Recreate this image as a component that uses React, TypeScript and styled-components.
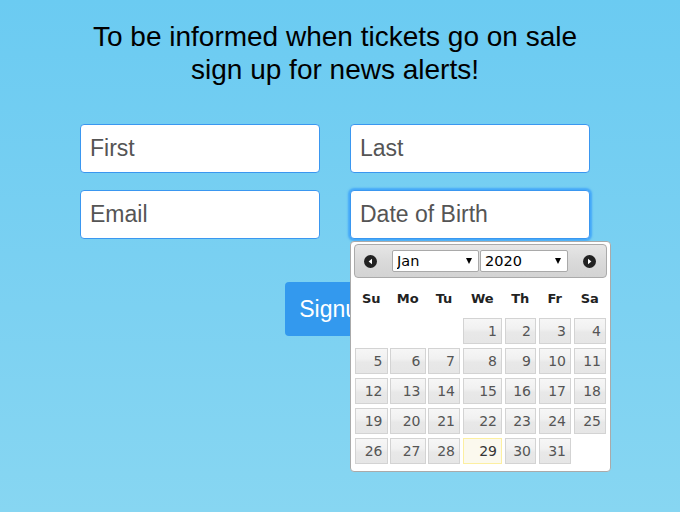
import React from "react";
import styled, { createGlobalStyle } from "styled-components";

const Global = createGlobalStyle`
  html, body { margin: 0; padding: 0; }
  body {
    font-family: "Liberation Sans", Arial, sans-serif;
    background: #6ccbf2;
  }
`;

const Page = styled.div`
  width: 680px;
  min-height: 512px;
  box-sizing: border-box;
  padding: 20px 10px 0 0;
  background: linear-gradient(to bottom, #6bcbf2 0%, #7cd1f2 60%, #87d6f2 100%);
  display: flex;
  flex-direction: column;
  align-items: center;
`;

const Heading = styled.h1`
  margin: 0;
  font-size: 28px;
  line-height: 33px;
  font-weight: normal;
  color: #000;
  text-align: center;
`;

const Form = styled.form`
  margin-top: 38px;
  display: flex;
  flex-direction: column;
  align-items: center;
`;

const Fields = styled.div`
  display: grid;
  grid-template-columns: 240px 240px;
  column-gap: 30px;
  row-gap: 17px;
`;

const FieldWrap = styled.div`
  position: relative;
`;

const TextInput = styled.input<{ $focused?: boolean }>`
  display: block;
  width: 240px;
  height: 49px;
  box-sizing: border-box;
  border: 1px solid #3a97f0;
  border-radius: 4px;
  padding: 0 9px;
  font-family: "Liberation Sans", Arial, sans-serif;
  font-size: 23px;
  color: #333;
  background: #fff;
  outline: none;
  box-shadow: ${(p) => (p.$focused ? "0 0 2px 2px #44a8f8" : "none")};
  &::placeholder {
    color: #555;
    opacity: 1;
  }
`;

const SubmitButton = styled.button`
  margin-top: 43px;
  height: 54px;
  padding: 0 14px;
  border: none;
  border-radius: 4px;
  background: #3399ee;
  color: #fff;
  font-family: "Liberation Sans", Arial, sans-serif;
  font-size: 23px;
`;

const Picker = styled.div`
  position: absolute;
  top: calc(100% + 2px);
  left: 0;
  z-index: 5;
  width: 261px;
  box-sizing: border-box;
  padding: 2px 3px 3px 3px;
  border: 1px solid #aaa;
  border-radius: 4px;
  background: #fff;
  font-family: "DejaVu Sans", Verdana, sans-serif;
  color: #222;
`;

const PickerHeader = styled.div`
  height: 34px;
  box-sizing: border-box;
  border: 1px solid #aaa;
  border-radius: 4px;
  background: linear-gradient(to bottom, #e6e6e6 0%, #dadada 50%, #d3d3d3 100%);
  display: flex;
  align-items: center;
  padding: 0 10px 0 9px;
`;

const NavIcon = styled.svg`
  width: 13px;
  height: 13px;
  flex: none;
`;

const Title = styled.div`
  flex: 1;
  display: flex;
  justify-content: center;
  gap: 1px;
`;

const SelectWrap = styled.span`
  position: relative;
  display: inline-block;
`;

const Select = styled.select<{ $w: number }>`
  appearance: none;
  -webkit-appearance: none;
  width: ${(p) => p.$w}px;
  height: 22px;
  box-sizing: border-box;
  border: 1px solid #a9a9a9;
  border-radius: 2px;
  background: #fff;
  padding: 0 0 0 4px;
  font-family: "DejaVu Sans", Verdana, sans-serif;
  font-size: 14.5px;
  color: #000;
  outline: none;
`;

const Caret = styled.span`
  position: absolute;
  right: 7px;
  top: 8px;
  width: 0;
  height: 0;
  border-left: 3.5px solid transparent;
  border-right: 3.5px solid transparent;
  border-top: 6px solid #000;
  pointer-events: none;
`;

const columns = "32.5px 35.5px 32px 39.5px 31.5px 32.5px 32.5px";

const Names = styled.div`
  display: grid;
  grid-template-columns: ${columns};
  column-gap: 2.5px;
  height: 36px;
  margin: 2px 1px 0;
  align-items: center;
`;

const Name = styled.span`
  text-align: center;
  font-weight: bold;
  font-size: 13px;
  color: #222;
`;

const Days = styled.div`
  display: grid;
  grid-template-columns: ${columns};
  column-gap: 2.5px;
  row-gap: 4px;
  margin: 2px 1px 4px;
`;

const Day = styled.span<{ $today?: boolean }>`
  height: 26px;
  box-sizing: border-box;
  border: 1px solid ${(p) => (p.$today ? "#fcefa1" : "#d3d3d3")};
  background: ${(p) =>
    p.$today
      ? "#fbf9ee"
      : "linear-gradient(to bottom, #f6f6f6 0%, #f1f1f1 40%, #e8e8e8 55%, #e6e6e6 100%)"};
  color: ${(p) => (p.$today ? "#363636" : "#555")};
  text-align: right;
  padding-right: 4px;
  font-size: 14px;
  line-height: 24px;
`;

const Blank = styled.span``;

const names = ["Su", "Mo", "Tu", "We", "Th", "Fr", "Sa"];

const Prev = () => (
  <NavIcon viewBox="0 0 13 13">
    <circle cx="6.5" cy="6.5" r="6.5" fill="#222" />
    <path d="M8 3.8 L4.6 6.5 L8 9.2 Z" fill="#fff" />
  </NavIcon>
);

const Next = () => (
  <NavIcon viewBox="0 0 13 13">
    <circle cx="6.5" cy="6.5" r="6.5" fill="#222" />
    <path d="M5 3.8 L8.4 6.5 L5 9.2 Z" fill="#fff" />
  </NavIcon>
);

const months = ["Jan", "Feb", "Mar", "Apr", "May", "Jun", "Jul", "Aug", "Sep", "Oct", "Nov", "Dec"];

export default function App() {
  const days = Array.from({ length: 31 }, (_, i) => i + 1);
  return (
    <>
      <Global />
      <Page>
        <Heading>
          To be informed when tickets go on sale
          <br />
          sign up for news alerts!
        </Heading>
        <Form onSubmit={(e) => e.preventDefault()}>
          <Fields>
            <TextInput placeholder="First" />
            <TextInput placeholder="Last" />
            <TextInput placeholder="Email" />
            <FieldWrap>
              <TextInput placeholder="Date of Birth" $focused />
              <Picker>
                <PickerHeader>
                  <Prev />
                  <Title>
                    <SelectWrap>
                      <Select $w={87} defaultValue="Jan">
                        {months.map((m) => (
                          <option key={m}>{m}</option>
                        ))}
                      </Select>
                      <Caret />
                    </SelectWrap>
                    <SelectWrap>
                      <Select $w={88} defaultValue="2020">
                        <option>2019</option>
                        <option>2020</option>
                        <option>2021</option>
                      </Select>
                      <Caret />
                    </SelectWrap>
                  </Title>
                  <Next />
                </PickerHeader>
                <Names>
                  {names.map((n) => (
                    <Name key={n}>{n}</Name>
                  ))}
                </Names>
                <Days>
                  <Blank />
                  <Blank />
                  <Blank />
                  {days.map((d) => (
                    <Day key={d} $today={d === 29}>
                      {d}
                    </Day>
                  ))}
                </Days>
              </Picker>
            </FieldWrap>
          </Fields>
          <SubmitButton type="submit">Signup</SubmitButton>
        </Form>
      </Page>
    </>
  );
}
